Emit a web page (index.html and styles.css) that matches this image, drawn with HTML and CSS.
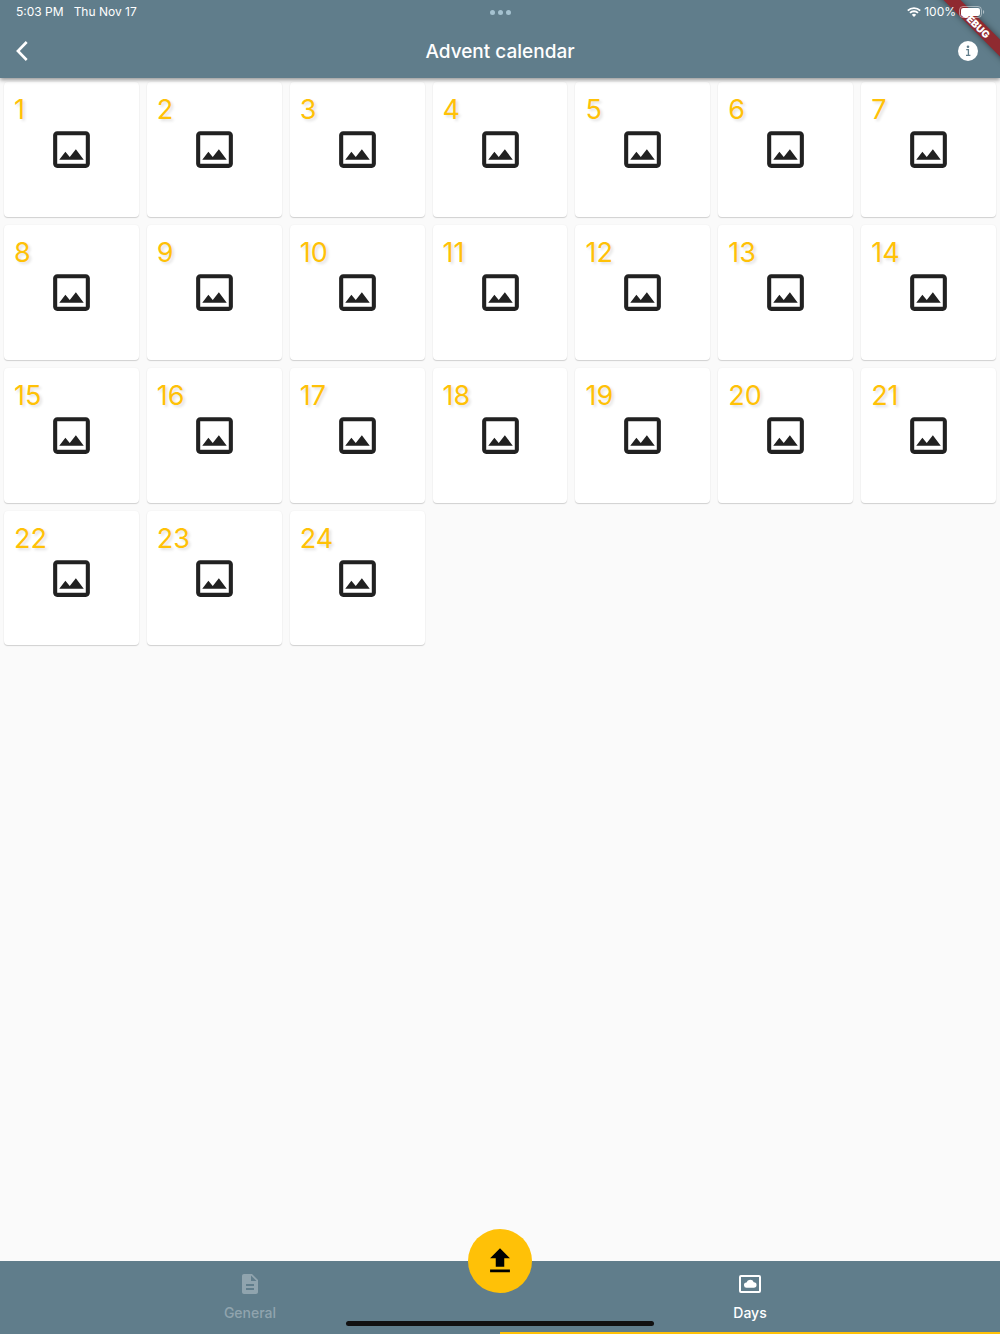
FILE: index.html
```html
<!DOCTYPE html>
<html lang="en">
<head>
    <meta charset="UTF-8">
    <meta name="viewport" content="width=device-width, initial-scale=1.0">
    <title>Advent calendar</title>
    <link rel="stylesheet" href="styles.css">
</head>
<body>

<header class="top">
    <div class="debug-banner">DEBUG</div>
    <div class="status-bar">
        <div class="status-left">
            <span>5:03 PM</span>
            <span>Thu Nov 17</span>
        </div>
        <div class="dots"><i></i><i></i><i></i></div>
        <div class="status-right">
            <svg width="14" height="10" viewBox="0 0 14 10" fill="none" stroke="#fff" stroke-width="1.8">
                <path d="M.8 3.6a8.8 8.8 0 0 1 12.4 0M3 5.9a5.7 5.7 0 0 1 8 0"/>
                <path d="M7 10 4.8 7.8a3.1 3.1 0 0 1 4.4 0z" fill="#fff" stroke="none"/>
            </svg>
            <span>100%</span>
            <svg width="26" height="12" viewBox="0 0 26 12">
                <rect x=".5" y=".5" width="22" height="11" rx="3.5" fill="none" stroke="#fff" stroke-opacity=".45"/>
                <rect x="2" y="2" width="19" height="8" rx="2.2" fill="#fff"/>
                <path d="M24 4v4c1.6-.6 1.6-3.4 0-4z" fill="#fff" fill-opacity=".5"/>
            </svg>
        </div>
    </div>
    <div class="app-bar">
        <button class="icon-button" aria-label="Back">
            <svg width="12" height="20" viewBox="0 0 12 20" fill="none" stroke="#fff" stroke-width="2.6">
                <path d="M10.7 1 1.9 10l8.800 9"/>
            </svg>
        </button>
        <h1>Advent calendar</h1>
        <button class="icon-button info" aria-label="Info">
            <svg width="20" height="20" viewBox="0 0 20 20">
                <circle cx="10" cy="10" r="10" fill="#fff"/>
                <circle cx="10" cy="5.8" r="1.3" fill="#607d8b"/>
                <path d="M8.200 8.700h2.200v5.300M8 14.300h4.400" fill="none" stroke="#607d8b" stroke-width="1.300"/>
            </svg>
        </button>
    </div>
</header>

<svg width="0" height="0" class="symbols">
    <symbol id="image" viewBox="0 0 24 24">
        <path d="M19 5v14H5V5h14m0-2H5c-1.1 0-2 .9-2 2v14c0 1.1.9 2 2 2h14c1.1 0 2-.9 2-2V5c0-1.1-.9-2-2-2zm-4.86 8.86-3 3.87L9 13.14 6 17h12l-3.86-5.14z"/>
    </symbol>
</svg>

<main class="days" id="days"></main>

<nav class="bottom">
    <button class="tab">
        <svg width="24" height="24" viewBox="0 0 24 24" fill="currentColor">
            <path d="M14 2H6c-1.1 0-2 .9-2 2v16c0 1.1.9 2 2 2h12c1.1 0 2-.9 2-2V8l-6-6zm2 16H8v-2h8v2zm0-4H8v-2h8v2zm-3-5V3.5L18.5 9H13z"/>
        </svg>
        <span>General</span>
    </button>
    <button class="tab active">
        <svg width="24" height="24" viewBox="0 0 24 24">
            <rect x="2" y="4" width="20" height="16" rx="1" fill="none" stroke="currentColor" stroke-width="2"/>
            <path d="M8.800 15.800a2.700 2.700 0 0 1-.3-5.400 3.900 3.900 0 0 1 7.300-.2 2.800 2.800 0 0 1-.1 5.600z" fill="currentColor"/>
        </svg>
        <span>Days</span>
    </button>
    <button class="upload" aria-label="Upload">
        <svg width="34" height="34" viewBox="0 0 24 24">
            <path d="M9 16h6v-6h4l-7-7-7 7h4zm-4 2h14v2H5z"/>
        </svg>
    </button>
    <div class="home-indicator"></div>
</nav>

<script>
    const days = document.getElementById('days');

    for (let i = 1; i <= 24; i++) {
        const card = document.createElement('button');
        card.className = 'day';
        card.innerHTML = '<span class="number">' + i + '</span><svg class="picture"><use href="#image"/></svg>';
        days.appendChild(card);
    }
</script>

</body>
</html>
```
FILE: styles.css
```css
* {
    box-sizing: border-box;
}

body {
    font-family: Inter, "Liberation Sans", sans-serif;
    margin: 0;
    min-height: 100vh;
    display: flex;
    flex-direction: column;
    overflow-x: hidden;
    background-color: #fafafa;
}

button {
    font-family: inherit;
    padding: 0;
    border: none;
    background: none;
    cursor: pointer;
}

svg {
    display: block;
}

.symbols {
    position: absolute;
}

.top {
    position: relative;
    z-index: 1;
    background-color: #607d8b;
    color: white;
    box-shadow: 0 2px 4px rgba(0, 0, 0, 0.4);
}

.status-bar {
    position: relative;
    display: grid;
    grid-template-columns: 1fr auto 1fr;
    align-items: center;
    height: 24px;
    padding: 0 15px 0 16px;
    font-size: 12px;
    line-height: 14px;
}

.status-left {
    display: flex;
    gap: 10px;
}

.status-right {
    display: flex;
    align-items: center;
    justify-content: flex-end;
    gap: 3px;
}

.dots {
    display: flex;
    gap: 3px;
}

.dots i {
    width: 5px;
    height: 5px;
    border-radius: 50%;
    background: #a5c2d0;
}

.app-bar {
    display: grid;
    grid-template-columns: 1fr auto 1fr;
    align-items: center;
    height: 54px;
    padding: 0 20px 0 10px;
}

.app-bar h1 {
    margin: 0 0 0 10px;
    font-size: 19px;
    font-weight: 500;
}

.icon-button {
    width: 24px;
    height: 24px;
    display: flex;
    align-items: center;
    justify-content: center;
}

.icon-button.info {
    justify-self: end;
}

/* debug ribbon, the status icons stay above it */
.debug-banner {
    position: absolute;
    top: 18px;
    right: -36px;
    width: 120px;
    height: 12px;
    transform: rotate(45deg);
    background: #8f2a30;
    color: white;
    box-shadow: 0 0 6px rgba(0, 0, 0, 0.5);
    font-size: 10px;
    font-weight: 900;
    line-height: 12px;
    text-align: center;
}

.days {
    flex: 1;
    display: grid;
    grid-template-columns: repeat(7, 1fr);
    align-content: start;
    gap: 8px;
    padding: 4px;
}

.day {
    position: relative;
    aspect-ratio: 1;
    display: flex;
    align-items: center;
    justify-content: center;
    background: white;
    border-radius: 4px;
    box-shadow: 0 1px 1px rgba(0, 0, 0, 0.16), 0 0 2px rgba(0, 0, 0, 0.06);
}

.number {
    position: absolute;
    top: 11px;
    left: 10px;
    color: #ffc107;
    font-size: 27px;
    line-height: 34px;
    text-shadow: 2px 2px 3px rgba(0, 0, 0, 0.12);
}

.picture {
    width: 49px;
    height: 49px;
    fill: #212121;
}

.bottom {
    position: relative;
    display: flex;
    height: 73px;
    background-color: #607d8b;
}

.tab {
    flex: 1;
    display: flex;
    flex-direction: column;
    align-items: center;
    gap: 8px;
    padding-top: 11px;
    border-bottom: 2px solid transparent;
    color: #90a4ae;
    font-size: 14px;
    font-weight: 500;
    line-height: 18px;
}

.tab.active {
    color: white;
    border-bottom-color: #ffc107;
}

.upload {
    position: absolute;
    top: -32px;
    left: calc(50% - 32px);
    width: 64px;
    height: 64px;
    display: flex;
    align-items: center;
    justify-content: center;
    border-radius: 50%;
    background: #ffc107;
}

.home-indicator {
    position: absolute;
    bottom: 8px;
    left: calc(50% - 154px);
    width: 308px;
    height: 5px;
    border-radius: 3px;
    background: #111;
}
```
